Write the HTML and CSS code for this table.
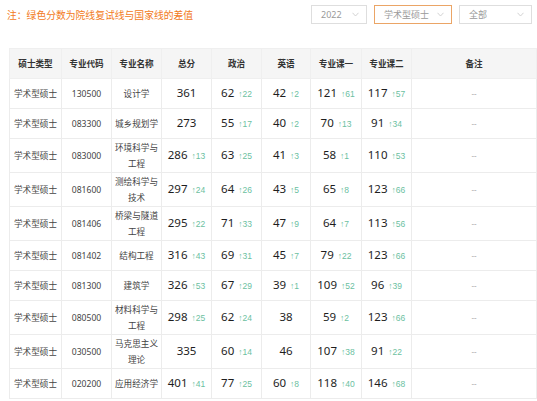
FILE: index.html
```html
<!DOCTYPE html>
<html lang="zh">
<head>
<meta charset="utf-8">
<link rel="stylesheet" href="styles.css">
</head>
<body>
<div class="top">
  <div class="note">注：绿色分数为院线复试线与国家线的差值</div>
  <div class="filters">
    <div class="sel w1"><span>2022</span><svg class="chev" width="7" height="5" viewBox="0 0 7 5"><path d="M0.5 0.8 L3.5 4 L6.5 0.8" fill="none" stroke="#c8c8c8" stroke-width="0.8"/></svg></div>
    <div class="sel w2 active"><span>学术型硕士</span><svg class="chev" width="7" height="5" viewBox="0 0 7 5"><path d="M0.5 0.8 L3.5 4 L6.5 0.8" fill="none" stroke="#c8c8c8" stroke-width="0.8"/></svg></div>
    <div class="sel w3"><span>全部</span><svg class="chev" width="7" height="5" viewBox="0 0 7 5"><path d="M0.5 0.8 L3.5 4 L6.5 0.8" fill="none" stroke="#c8c8c8" stroke-width="0.8"/></svg></div>
  </div>
</div>
<table class="grid">
  <colgroup>
    <col class="c1"><col class="c2"><col class="c3"><col class="c4"><col class="c5"><col class="c6"><col class="c7"><col class="c8"><col class="c9">
  </colgroup>
  <thead>
    <tr><th>硕士类型</th><th>专业代码</th><th>专业名称</th><th>总分</th><th>政治</th><th>英语</th><th>专业课一</th><th>专业课二</th><th>备注</th></tr>
  </thead>
  <tbody>
    <tr><td>学术型硕士</td><td>130500</td><td>设计学</td><td><b>361</b></td><td><b>62</b><i>↑22</i></td><td><b>42</b><i>↑2</i></td><td><b>121</b><i>↑61</i></td><td><b>117</b><i>↑57</i></td><td class="rm">--</td></tr>
    <tr><td>学术型硕士</td><td>083300</td><td>城乡规划学</td><td><b>273</b></td><td><b>55</b><i>↑17</i></td><td><b>40</b><i>↑2</i></td><td><b>70</b><i>↑13</i></td><td><b>91</b><i>↑34</i></td><td class="rm">--</td></tr>
    <tr class="tall"><td>学术型硕士</td><td>083000</td><td>环境科学与工程</td><td><b>286</b><i>↑13</i></td><td><b>63</b><i>↑25</i></td><td><b>41</b><i>↑3</i></td><td><b>58</b><i>↑1</i></td><td><b>110</b><i>↑53</i></td><td class="rm">--</td></tr>
    <tr class="tall"><td>学术型硕士</td><td>081600</td><td>测绘科学与技术</td><td><b>297</b><i>↑24</i></td><td><b>64</b><i>↑26</i></td><td><b>43</b><i>↑5</i></td><td><b>65</b><i>↑8</i></td><td><b>123</b><i>↑66</i></td><td class="rm">--</td></tr>
    <tr class="tall"><td>学术型硕士</td><td>081406</td><td>桥梁与隧道工程</td><td><b>295</b><i>↑22</i></td><td><b>71</b><i>↑33</i></td><td><b>47</b><i>↑9</i></td><td><b>64</b><i>↑7</i></td><td><b>113</b><i>↑56</i></td><td class="rm">--</td></tr>
    <tr><td>学术型硕士</td><td>081402</td><td>结构工程</td><td><b>316</b><i>↑43</i></td><td><b>69</b><i>↑31</i></td><td><b>45</b><i>↑7</i></td><td><b>79</b><i>↑22</i></td><td><b>123</b><i>↑66</i></td><td class="rm">--</td></tr>
    <tr><td>学术型硕士</td><td>081300</td><td>建筑学</td><td><b>326</b><i>↑53</i></td><td><b>67</b><i>↑29</i></td><td><b>39</b><i>↑1</i></td><td><b>109</b><i>↑52</i></td><td><b>96</b><i>↑39</i></td><td class="rm">--</td></tr>
    <tr class="tall"><td>学术型硕士</td><td>080500</td><td>材料科学与工程</td><td><b>298</b><i>↑25</i></td><td><b>62</b><i>↑24</i></td><td><b>38</b></td><td><b>59</b><i>↑2</i></td><td><b>123</b><i>↑66</i></td><td class="rm">--</td></tr>
    <tr class="tall"><td>学术型硕士</td><td>030500</td><td>马克思主义理论</td><td><b>335</b></td><td><b>60</b><i>↑14</i></td><td><b>46</b></td><td><b>107</b><i>↑38</i></td><td><b>91</b><i>↑22</i></td><td class="rm">--</td></tr>
    <tr><td>学术型硕士</td><td>020200</td><td>应用经济学</td><td><b>401</b><i>↑41</i></td><td><b>77</b><i>↑25</i></td><td><b>60</b><i>↑8</i></td><td><b>118</b><i>↑40</i></td><td><b>146</b><i>↑68</i></td><td class="rm">--</td></tr>
  </tbody>
</table>
</body>
</html>
```

FILE: styles.css
```css
html, body {
  margin: 0;
  padding: 0;
  background: #ffffff;
}
body {
  font-family: "Noto Sans", "Noto Sans CJK SC", sans-serif;
  color: #333333;
  width: 537px;
  height: 401px;
  overflow: hidden;
}
.top {
  display: flex;
  align-items: center;
  height: 29px;
  padding: 0 5px 0 7px;
}
.note {
  font-size: 9.8px;
  color: #f27a22;
}
.filters {
  margin-left: auto;
  display: flex;
  gap: 7px;
}
.sel {
  box-sizing: border-box;
  height: 19px;
  border: 1px solid #dedede;
  display: flex;
  align-items: center;
  justify-content: space-between;
  padding: 0 7px 0 9px;
  font-size: 9px;
  color: #9a9a9a;
  background: #fff;
}
.sel.active {
  border-color: #eba566;
}
.w1 { width: 56px; }
.w2 { width: 78px; }
.w3 { width: 73px; }
.chev { display: block; }
.grid {
  margin: 19px 0 0 9px;
  border-collapse: collapse;
  table-layout: fixed;
  width: 527px;
  font-family: "Noto Sans", "Noto Sans CJK SC", sans-serif;
}
.c1 { width: 52px; }
.c2 { width: 50px; }
.c3 { width: 50px; }
.c4 { width: 50px; }
.c5 { width: 50px; }
.c6 { width: 49px; }
.c7 { width: 51px; }
.c8 { width: 50px; }
.c9 { width: 125px; }
.grid th, .grid td {
  border: 1px solid #ececec;
  text-align: center;
  vertical-align: middle;
  padding: 0 3px;
  font-size: 8.6px;
}
.grid th {
  background: #f5f5f5;
  height: 29px;
  font-weight: bold;
  color: #333;
  border-color: #efefef;
}
.grid td {
  height: 29px;
  line-height: 16px;
  color: #444;
}
.grid tr.tall td {
  height: 33px;
}
.grid b {
  font-weight: normal;
  font-size: 11.5px;
  color: #1e1e1e;
}
.grid i {
  font-style: normal;
  font-family: "Liberation Sans", "Noto Sans", sans-serif;
  font-size: 8.5px;
  color: #6cbf9f;
  margin-left: 4px;
}
.grid td.rm {
  color: #b0b0b0;
  font-size: 8px;
}
```
